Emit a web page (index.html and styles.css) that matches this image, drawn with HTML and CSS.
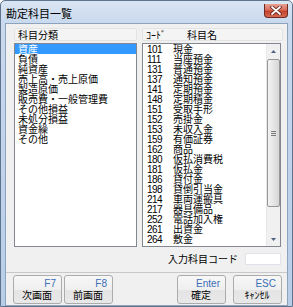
FILE: index.html
```html
<!DOCTYPE html>
<html lang="ja">
<head>
    <meta charset="UTF-8">
    <title>勘定科目一覧</title>
    <link rel="stylesheet" href="styles.css">
</head>
<body>
    <div class="window">
        <div class="titlebar">
            <span class="title">勘定科目一覧</span>
            <div class="close">
                <svg width="12" height="9" viewBox="0 0 12 9">
                    <path d="M2 1 L10 8 M10 1 L2 8" stroke="#5a1d18" stroke-width="3.4" stroke-linecap="round"/>
                    <path d="M2 1 L10 8 M10 1 L2 8" stroke="#ffffff" stroke-width="1.8" stroke-linecap="round"/>
                </svg>
            </div>
        </div>
        <div class="client">
            <div class="lists">
                <div class="col col-left">
                    <div class="colhead">科目分類</div>
                    <ul class="listbox cats">
                        <li class="selected">資産</li>
                        <li>負債</li>
                        <li>純資産</li>
                        <li>売上高・売上原価</li>
                        <li>製造原価</li>
                        <li>販売費・一般管理費</li>
                        <li>その他損益</li>
                        <li>未処分損益</li>
                        <li>資金繰</li>
                        <li>その他</li>
                    </ul>
                </div>
                <div class="col col-right">
                    <div class="colhead"><span class="head-code">ｺｰﾄﾞ</span><span>科目名</span></div>
                    <div class="listbox accounts">
                        <ul>
                            <li><span class="code">101</span>現金</li>
                            <li><span class="code">111</span>当座預金</li>
                            <li><span class="code">131</span>普通預金</li>
                            <li><span class="code">137</span>通知預金</li>
                            <li><span class="code">141</span>定期預金</li>
                            <li><span class="code">148</span>定期積金</li>
                            <li><span class="code">151</span>受取手形</li>
                            <li><span class="code">152</span>売掛金</li>
                            <li><span class="code">153</span>未収入金</li>
                            <li><span class="code">159</span>有価証券</li>
                            <li><span class="code">162</span>商品</li>
                            <li><span class="code">180</span>仮払消費税</li>
                            <li><span class="code">181</span>仮払金</li>
                            <li><span class="code">186</span>貸付金</li>
                            <li><span class="code">198</span>貸倒引当金</li>
                            <li><span class="code">214</span>車両運搬具</li>
                            <li><span class="code">217</span>器具備品</li>
                            <li><span class="code">252</span>電話加入権</li>
                            <li><span class="code">261</span>出資金</li>
                            <li><span class="code">264</span>敷金</li>
                        </ul>
                        <div class="scrollbar">
                            <div class="arrow">
                                <svg width="5" height="3" viewBox="0 0 5 3"><path d="M0 3 L2.5 0 L5 3 Z" fill="#4d6185"/></svg>
                            </div>
                            <div class="track">
                                <div class="thumb">
                                    <svg width="5" height="5" viewBox="0 0 5 5"><path d="M0 0.5 H5 M0 2.5 H5 M0 4.5 H5" stroke="#7a7a7a" stroke-width="1"/></svg>
                                </div>
                            </div>
                            <div class="arrow">
                                <svg width="5" height="3" viewBox="0 0 5 3"><path d="M0 0 L2.5 3 L5 0 Z" fill="#4d6185"/></svg>
                            </div>
                        </div>
                    </div>
                </div>
            </div>
            <div class="inputrow">
                <label for="code">入力科目コード</label>
                <input type="text" id="code">
            </div>
            <div class="footer">
                <div class="btngroup">
                    <button class="fbtn"><span class="key">F7</span><span class="cap">次画面</span></button>
                    <button class="fbtn"><span class="key">F8</span><span class="cap">前画面</span></button>
                </div>
                <div class="btngroup">
                    <button class="fbtn"><span class="key">Enter</span><span class="cap">確定</span></button>
                    <button class="fbtn"><span class="key">ESC</span><span class="cap">ｷｬﾝｾﾙ</span></button>
                </div>
            </div>
        </div>
    </div>
</body>
</html>
```

FILE: styles.css
```css
body {
    margin: 0;
    padding: 0;
    font-family: "Noto Sans CJK JP", sans-serif;
    font-size: 10px;
    color: #000;
}
.window {
    width: 293px;
    height: 307px;
    box-sizing: border-box;
    border: 1px solid #5f738c;
    border-radius: 5px 5px 0 0;
    background: linear-gradient(to bottom, #d9e5f3 0px, #c9d9ee 22px, #b7cde8 100%);
    padding: 0 4px 5px 4px;
    display: flex;
    flex-direction: column;
}
.titlebar {
    height: 22px;
    display: flex;
    align-items: center;
    justify-content: space-between;
    flex-shrink: 0;
}
.title {
    font-size: 11px;
    line-height: 12px;
    padding-left: 1px;
    margin-top: 1px;
}
.close {
    width: 24px;
    height: 14px;
    margin-top: -3px;
    box-sizing: border-box;
    border: 1px solid #6e2a22;
    border-top: none;
    border-radius: 0 0 4px 4px;
    background: linear-gradient(to bottom, #e8a092 0%, #d8705e 45%, #c5412e 55%, #d56a50 100%);
    display: flex;
    align-items: center;
    justify-content: center;
}
.client {
    flex: 1;
    background: #f0f0f0;
    border: 1px solid #8da2bd;
    padding: 4px 4px 0 8px;
    display: flex;
    flex-direction: column;
}
.lists {
    display: flex;
    gap: 5px;
}
.col-left {
    width: 123px;
}
.col-right {
    width: 141px;
}
.colhead {
    height: 13px;
    box-sizing: border-box;
    border: 1px solid #e3e3e3;
    border-radius: 2px;
    background: #f4f4f4;
    line-height: 11px;
    padding-left: 3px;
    margin-bottom: 2px;
    white-space: nowrap;
}
.head-code {
    display: inline-block;
    width: 41px;
}
.listbox {
    height: 204px;
    box-sizing: border-box;
    border: 1px solid #828790;
    background: #fff;
    margin: 0;
    padding: 0;
    list-style: none;
}
.cats li {
    line-height: 10px;
    height: 10px;
    padding-left: 3px;
    white-space: nowrap;
}
.cats li.selected {
    background: #3399ff;
    color: #fff;
}
.accounts {
    display: flex;
    width: 139px;
}
.accounts ul {
    flex: 1;
    margin: 0;
    padding: 0;
    list-style: none;
}
.accounts li {
    line-height: 10px;
    height: 10px;
    padding-left: 4px;
    white-space: nowrap;
}
.code {
    display: inline-block;
    width: 26px;
    font-family: "Liberation Sans", sans-serif;
    font-size: 10px;
    letter-spacing: -0.5px;
}
.scrollbar {
    width: 13px;
    display: flex;
    flex-direction: column;
    background: #f0f0f0;
    border-left: 1px solid #e8e8e8;
}
.arrow {
    height: 14px;
    display: flex;
    align-items: center;
    justify-content: center;
}
.track {
    flex: 1;
    padding: 1px 0;
    display: flex;
}
.thumb {
    width: 100%;
    height: 148px;
    box-sizing: border-box;
    border: 1px solid #979797;
    border-radius: 2px;
    background: linear-gradient(to right, #f3f3f3, #e6e6e6 50%, #d6d6d6);
    display: flex;
    align-items: center;
    justify-content: center;
}
.inputrow {
    display: flex;
    justify-content: flex-end;
    align-items: center;
    gap: 7px;
    margin-top: 4px;
    padding-right: 2px;
}
.inputrow label {
    font-size: 10px;
}
.inputrow input {
    width: 36px;
    height: 12px;
    box-sizing: border-box;
    border: 1px solid #e2e3ea;
    background: #fff;
    padding: 0;
    margin: 0;
}
.footer {
    margin-top: 6px;
    margin-left: -8px;
    margin-right: -4px;
    border-top: 1px solid #c8c8c8;
    padding: 2px 5px 1px 7px;
    display: flex;
    justify-content: space-between;
}
.btngroup {
    display: flex;
    gap: 2px;
}
.btngroup + .btngroup {
    gap: 7px;
}
.fbtn {
    width: 49px;
    height: 29px;
    box-sizing: border-box;
    border: 1px solid #acacac;
    border-radius: 3px;
    background: linear-gradient(to bottom, #f7f7f7 0%, #efefef 50%, #e4e4e4 51%, #e8e8e8 100%);
    padding: 2px 5px 0 4px;
    margin: 0;
    font-family: "Noto Sans CJK JP", sans-serif;
    display: flex;
    flex-direction: column;
}
.key {
    align-self: flex-end;
    font-family: "Liberation Sans", sans-serif;
    font-size: 10px;
    line-height: 11px;
    color: #3b6fb6;
}
.cap {
    align-self: center;
    font-size: 10px;
    line-height: 12px;
    color: #000;
}
```
